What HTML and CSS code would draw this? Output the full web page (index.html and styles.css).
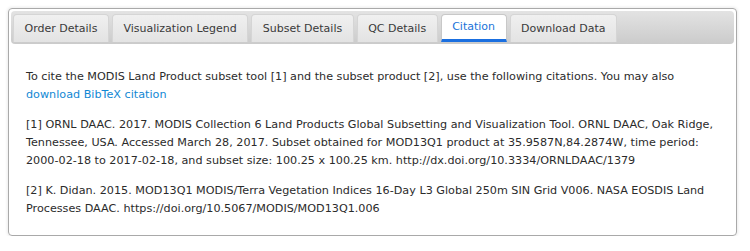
FILE: index.html
```
<!DOCTYPE html>
<html>
<head>
<meta charset="utf-8">
<link rel="stylesheet" href="styles.css">
</head>
<body>
<div class="panel">
  <div class="tabs">
    <div class="tab">Order Details</div>
    <div class="tab">Visualization Legend</div>
    <div class="tab">Subset Details</div>
    <div class="tab">QC Details</div>
    <div class="tab active">Citation</div>
    <div class="tab">Download Data</div>
  </div>
  <div class="content">
    <p>To cite the MODIS Land Product subset tool [1] and the subset product [2], use the following citations. You may also <a href="#">download BibTeX citation</a></p>
    <p>[1] ORNL DAAC. 2017. MODIS Collection 6 Land Products Global Subsetting and Visualization Tool. ORNL DAAC, Oak Ridge, Tennessee, USA. Accessed March 28, 2017. Subset obtained for MOD13Q1 product at 35.9587N,84.2874W, time period: 2000-02-18 to 2017-02-18, and subset size: 100.25 x 100.25 km. http://dx.doi.org/10.3334/ORNLDAAC/1379</p>
    <p>[2] K. Didan. 2015. MOD13Q1 MODIS/Terra Vegetation Indices 16-Day L3 Global 250m SIN Grid V006. NASA EOSDIS Land Processes DAAC. https://doi.org/10.5067/MODIS/MOD13Q1.006</p>
  </div>
</div>
</body>
</html>
```
FILE: styles.css
```
html, body { margin: 0; padding: 0; background: #fff; }
body { font-family: "DejaVu Sans", Verdana, sans-serif; font-size: 11px; color: #2b2b2b; }
.panel {
  margin: 8px 0 0 8px;
  width: 723px;
  height: 222px;
  border: 1px solid #a9a9a9;
  border-radius: 4px;
  padding: 2px;
  box-shadow: 0 0 3px 1px rgba(0,0,0,0.08);
}
.tabs {
  display: flex;
  gap: 3px;
  height: 30px;
  padding: 3px 2px 0 2px;
  background: linear-gradient(#e3e3e3, #cbcbcb);
  border-radius: 4px;
}
.tab {
  height: 28px;
  line-height: 27px;
  padding: 0 10.5px;
  background: linear-gradient(#f0f0f0, #e3e3e3);
  border: 1px solid #d5d5d5;
  border-bottom: none;
  border-radius: 4px 4px 0 0;
  color: #3a3a3a;
  box-sizing: border-box;
}
.tab.active {
  background: #fff;
  color: #1a73d9;
  border-color: #c8c8c8;
  border-bottom: 3px solid #1a6fe0;
  line-height: 24px;
}
.content { padding: 12px 15px 0 15px; font-size: 11.2px; }
.content p { margin: 12px 0; line-height: 18px; }
.content a { color: #1188d4; text-decoration: none; }
```
